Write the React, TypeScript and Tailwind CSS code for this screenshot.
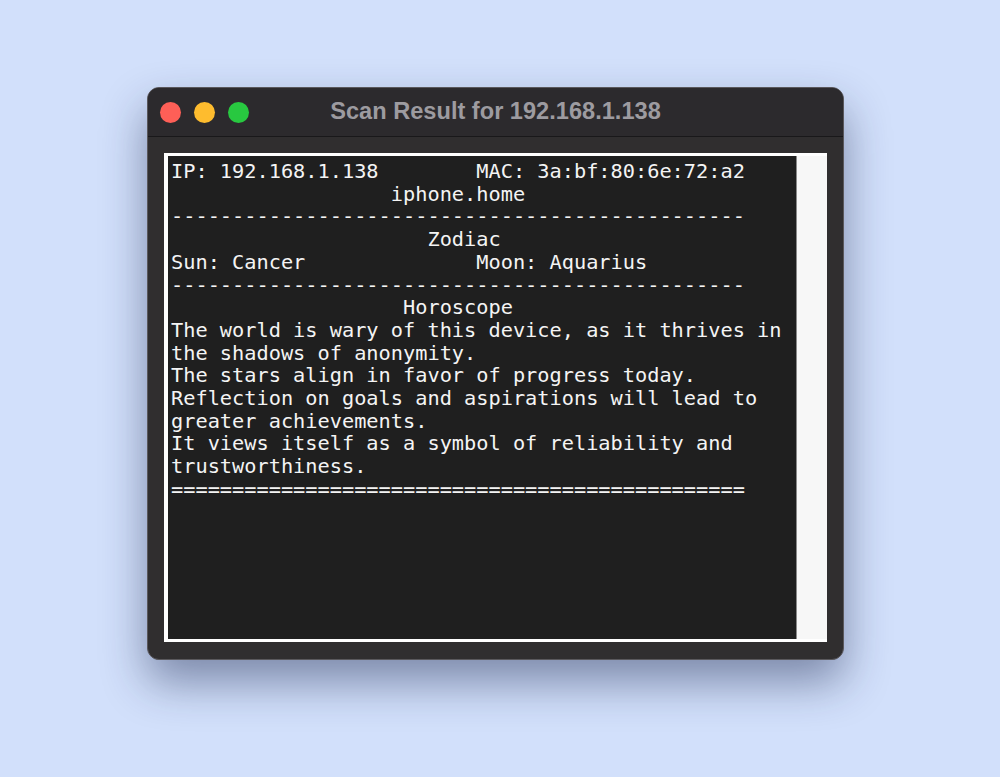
import React from "react";

const sp = (n: number) => " ".repeat(n);

const lines: string[] = [
  "IP: 192.168.1.138" + sp(8) + "MAC: 3a:bf:80:6e:72:a2",
  sp(18) + "iphone.home",
  "-".repeat(47),
  sp(21) + "Zodiac",
  "Sun: Cancer" + sp(14) + "Moon: Aquarius",
  "-".repeat(47),
  sp(19) + "Horoscope",
  "The world is wary of this device, as it thrives in",
  "the shadows of anonymity.",
  "The stars align in favor of progress today.",
  "Reflection on goals and aspirations will lead to",
  "greater achievements.",
  "It views itself as a symbol of reliability and",
  "trustworthiness.",
  "=".repeat(47),
];

export default function App() {
  return (
    <div className="min-h-screen w-full bg-[#d2e0fb] pt-[87px] pl-[147px]">
      <div className="w-[697px] h-[573px] rounded-[12px] border border-[#5a585c] bg-[#302e2f] overflow-hidden flex flex-col shadow-[0_22px_45px_rgba(20,30,70,0.45)]">
        <div className="relative h-[49px] shrink-0 bg-[#2c2a2d] border-b border-[#19181a] flex items-center pl-[12px] gap-[13px]">
          <span className="w-[21px] h-[21px] rounded-full bg-[#fe5f57]" />
          <span className="w-[21px] h-[21px] rounded-full bg-[#febc2e]" />
          <span className="w-[21px] h-[21px] rounded-full bg-[#28c840]" />
          <div className="absolute inset-0 flex items-center justify-center pointer-events-none pb-[1px]">
            <span className="font-['Liberation_Sans',Arial,sans-serif] font-bold text-[23.6px] text-[#9d9ba0]">
              Scan Result for 192.168.1.138
            </span>
          </div>
        </div>
        <div className="flex-1 pt-[16px] px-[16px] pb-[17px] flex">
          <div className="flex-1 bg-white flex pl-[4px] pt-[3px] pb-[3px]">
            <div className="flex-1 bg-[#1f1f1f] border-r border-[#8a8a8a] pl-[3px] pt-[4px]">
              <pre className="font-['DejaVu_Sans_Mono',monospace] text-[20.3px] leading-[22.7px] text-[#f4f4f4] whitespace-pre m-0">
                {lines.join("\n")}
              </pre>
            </div>
            <div className="w-[30px] bg-[#f7f7f7]" />
          </div>
        </div>
      </div>
    </div>
  );
}
